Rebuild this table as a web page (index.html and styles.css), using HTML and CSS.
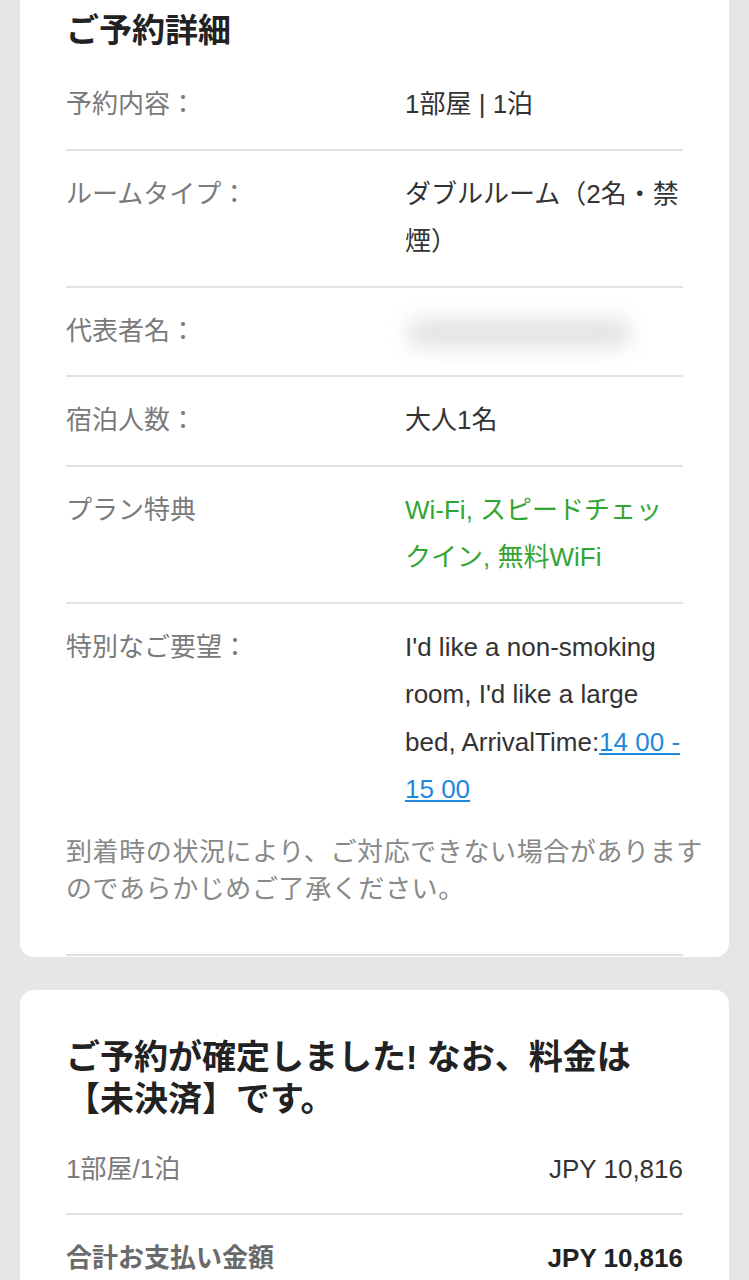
FILE: index.html
```html
<!DOCTYPE html>
<html lang="ja">
<head>
<meta charset="utf-8">
<link rel="stylesheet" href="styles.css">
</head>
<body>
<div class="page">
  <section class="card card-details">
    <h2 class="card-title">ご予約詳細</h2>
    <div class="row">
      <div class="label">予約内容：</div>
      <div class="value">1部屋 | 1泊</div>
    </div>
    <div class="row">
      <div class="label">ルームタイプ：</div>
      <div class="value">ダブルルーム（2名・禁煙）</div>
    </div>
    <div class="row">
      <div class="label">代表者名：</div>
      <div class="value"><span class="blurred"></span></div>
    </div>
    <div class="row">
      <div class="label">宿泊人数：</div>
      <div class="value">大人1名</div>
    </div>
    <div class="row">
      <div class="label">プラン特典</div>
      <div class="value green">Wi-Fi, スピードチェックイン, 無料WiFi</div>
    </div>
    <div class="row row-last">
      <div class="label">特別なご要望：</div>
      <div class="value">I'd like a non-smoking room, I'd like a large bed, ArrivalTime:<a class="link" href="#">14 00 - 15 00</a></div>
    </div>
    <div class="note-block">
      <p class="note">到着時の状況により、ご対応できない場合がありますのであらかじめご了承ください。</p>
    </div>
  </section>

  <section class="card card-price">
    <h2 class="price-title">ご予約が確定しました! なお、料金は【未決済】です。</h2>
    <div class="price-row">
      <div class="label">1部屋/1泊</div>
      <div class="amount">JPY 10,816</div>
    </div>
    <div class="price-row total">
      <div class="label">合計お支払い金額</div>
      <div class="amount">JPY 10,816</div>
    </div>
  </section>
</div>
</body>
</html>
```

FILE: styles.css
```css
html, body {
  margin: 0;
  padding: 0;
}
body {
  background: #e6e6e8;
  font-family: "Liberation Sans", "Noto Sans CJK JP", sans-serif;
  color: #333;
  overflow: hidden;
}
.page {
  padding: 0 20px;
  display: flex;
  flex-direction: column;
  gap: 33px;
}
.card {
  background: #fff;
  border-radius: 14px;
  padding: 0 46px;
}
.card-details {
  margin-top: -20px;
  padding-top: 20px;
  padding-bottom: 1px;
}
.card-title {
  margin: 0;
  font-size: 33px;
  font-weight: bold;
  color: #222;
  line-height: 61px;
}
.row {
  display: grid;
  grid-template-columns: 339px 1fr;
  padding: 20px 0;
  border-bottom: 2px solid #e3e3e5;
  font-size: 26px;
  line-height: 47.5px;
}
.row-last {
  border-bottom: none;
}
.label {
  color: #7a7a7a;
}
.value {
  color: #333;
}
.green {
  color: #33a532;
}
.link {
  color: #2188db;
  text-decoration: underline;
}
.blurred {
  display: inline-block;
  width: 224px;
  height: 28px;
  margin-left: 2px;
  vertical-align: middle;
  background: #e2e2e4;
  border-radius: 14px;
  filter: blur(10px);
}
.note-block {
  padding-bottom: 46px;
  border-bottom: 2px solid #e0e0e4;
}
.note {
  margin: 0;
  width: 650px;
  font-size: 26px;
  line-height: 37px;
  letter-spacing: 0.6px;
  color: #888;
}
.card-price {
  padding-top: 46px;
  padding-bottom: 40px;
}
.price-title {
  margin: 0 0 6px;
  font-size: 34px;
  font-weight: bold;
  color: #222;
  line-height: 42px;
}
.price-row {
  display: flex;
  justify-content: space-between;
  padding: 20px 0;
  font-size: 26px;
  line-height: 47.5px;
  border-bottom: 2px solid #e3e3e5;
}
.price-row.total {
  border-bottom: none;
}
.amount {
  color: #333;
}
.total .label {
  color: #6a6a6a;
  font-weight: bold;
}
.total .amount {
  font-weight: bold;
  color: #222;
}
```
